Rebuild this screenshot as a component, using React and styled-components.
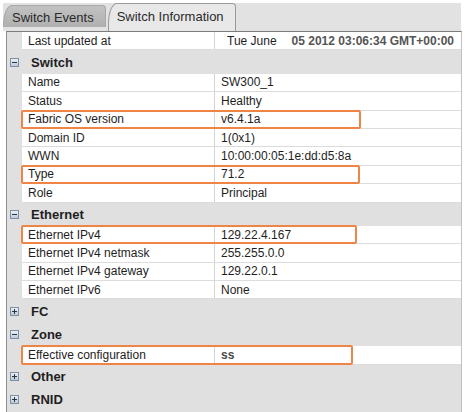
import React from 'react';
import styled, { createGlobalStyle } from 'styled-components';

const GlobalStyle = createGlobalStyle`
  html, body {
    margin: 0;
    padding: 0;
    background: #fff;
  }
  body {
    font-family: "Liberation Sans", Arial, sans-serif;
  }
`;

const switchRows = [
  { label: 'Name', value: 'SW300_1' },
  { label: 'Status', value: 'Healthy' },
  { label: 'Fabric OS version', value: 'v6.4.1a', mark: 340 },
  { label: 'Domain ID', value: '1(0x1)' },
  { label: 'WWN', value: '10:00:00:05:1e:dd:d5:8a' },
  { label: 'Type', value: '71.2', mark: 339 },
  { label: 'Role', value: 'Principal' },
];

const ethernetRows = [
  { label: 'Ethernet IPv4', value: '129.22.4.167', mark: 336 },
  { label: 'Ethernet IPv4 netmask', value: '255.255.0.0' },
  { label: 'Ethernet IPv4 gateway', value: '129.22.0.1' },
  { label: 'Ethernet IPv6', value: 'None' },
];

const Toggle = ({ open }) => (
  <svg width="9" height="9" viewBox="0 0 9 9">
    <defs>
      <linearGradient id="tg" x1="0" y1="0" x2="0" y2="1">
        <stop offset="0" stopColor="#eef3f8" />
        <stop offset="1" stopColor="#b8c7d6" />
      </linearGradient>
    </defs>
    <rect x="0.5" y="0.5" width="8" height="8" fill="url(#tg)" stroke="#7d91a6" />
    <rect x="2" y="4" width="5" height="1" fill="#2b3440" />
    {!open && <rect x="4" y="2" width="1" height="5" fill="#2b3440" />}
  </svg>
);

const DataRow = ({ label, value, mark, bold }) => (
  <Row>
    <Gutter />
    <Cells>
      <Label>{label}</Label>
      <Value $bold={bold}>{value}</Value>
      {mark && <Highlight style={{ width: mark }} />}
    </Cells>
  </Row>
);

const Group = ({ title, open, children }) => (
  <>
    <Header>
      <Gutter>
        <Toggle open={open} />
      </Gutter>
      <HeaderLabel>{title}</HeaderLabel>
    </Header>
    {open && children}
  </>
);

export default function App() {
  return (
    <Window>
      <GlobalStyle />
      <TabBar>
        <Tab>Switch Events</Tab>
        <Tab $active>Switch Information</Tab>
      </TabBar>
      <Panel>
        <Row>
          <Gutter />
          <Cells>
            <Label>Last updated at</Label>
            <Value>
              <DateText>Tue June</DateText>
              <TimeText>05 2012 03:06:34 GMT+00:00</TimeText>
            </Value>
          </Cells>
        </Row>
        <Group title="Switch" open>
          {switchRows.map((r) => (
            <DataRow key={r.label} {...r} />
          ))}
        </Group>
        <Group title="Ethernet" open>
          {ethernetRows.map((r) => (
            <DataRow key={r.label} {...r} />
          ))}
        </Group>
        <Group title="FC" />
        <Group title="Zone" open>
          <DataRow label="Effective configuration" value="ss" mark={332} bold />
        </Group>
        <Group title="Other" />
        <Group title="RNID" />
      </Panel>
    </Window>
  );
}

const Window = styled.div`
  width: 465px;
  height: 412px;
  overflow: hidden;
  padding: 3px 0 0 3px;
  box-sizing: border-box;
  background: #fff;
`;

const TabBar = styled.div`
  display: flex;
  align-items: flex-start;
  gap: 2px;
  width: 458px;
  height: 28px;
  background: #e2e2e2;
`;

const Tab = styled.div`
  box-sizing: border-box;
  height: ${(p) => (p.$active ? '28px' : '22px')};
  margin-top: ${(p) => (p.$active ? '0' : '2px')};
  padding: ${(p) => (p.$active ? '5px 11px 0 8px' : '4px 11px 0 8px')};
  font-size: 13px;
  color: #2a2a2a;
  white-space: nowrap;
  background: ${(p) => (p.$active ? '#e8e8e8' : 'linear-gradient(#c2c2c2, #b0b0b0)')};
  border: 1px solid ${(p) => (p.$active ? '#9a9a9a' : '#a8a8a8')};
  border-bottom: none;
  border-radius: 9px 4px 0 0 / 20px 4px 0 0;
`;

const Panel = styled.div`
  margin-left: 3px;
  width: 456px;
  height: 400px;
  box-sizing: border-box;
  background: #e0e0e0;
  border-top: 1px solid #7c7c7c;
  border-left: 1px solid #8e8e8e;
  border-right: 1px solid #c2c2c2;
`;

const Row = styled.div`
  display: flex;
  height: 18.4px;
`;

const Header = styled(Row)`
  height: 23.4px;
  align-items: center;
`;

const Gutter = styled.div`
  flex: none;
  width: 15px;
  display: flex;
  align-items: center;
  justify-content: center;
`;

const Cells = styled.div`
  position: relative;
  flex: 1;
  display: flex;
  align-items: center;
  background: #fff;
  border-bottom: 1px solid #dcdcdc;
  box-sizing: border-box;
  font-size: 12px;
  color: #1e1e1e;
`;

const Label = styled.div`
  flex: none;
  width: 193px;
  height: 100%;
  display: flex;
  align-items: center;
  box-sizing: border-box;
  padding-left: 6px;
  border-right: 1px solid #d4d4d4;
  white-space: nowrap;
`;

const Value = styled.div`
  padding-left: 6px;
  white-space: nowrap;
  font-weight: ${(p) => (p.$bold ? 'bold' : 'normal')};
  color: ${(p) => (p.$bold ? '#4a4a4a' : 'inherit')};
`;

const DateText = styled.span`
  margin-left: 6px;
`;

const TimeText = styled.span`
  margin-left: 15px;
  font-weight: bold;
  color: #555;
`;

const HeaderLabel = styled.div`
  padding-left: 9px;
  font-size: 13px;
  font-weight: bold;
  color: #1e1e1e;
`;

const Highlight = styled.div`
  position: absolute;
  left: -1px;
  top: -1px;
  bottom: -1px;
  box-sizing: border-box;
  border: 2px solid #ee8546;
  border-radius: 2px;
  pointer-events: none;
`;
